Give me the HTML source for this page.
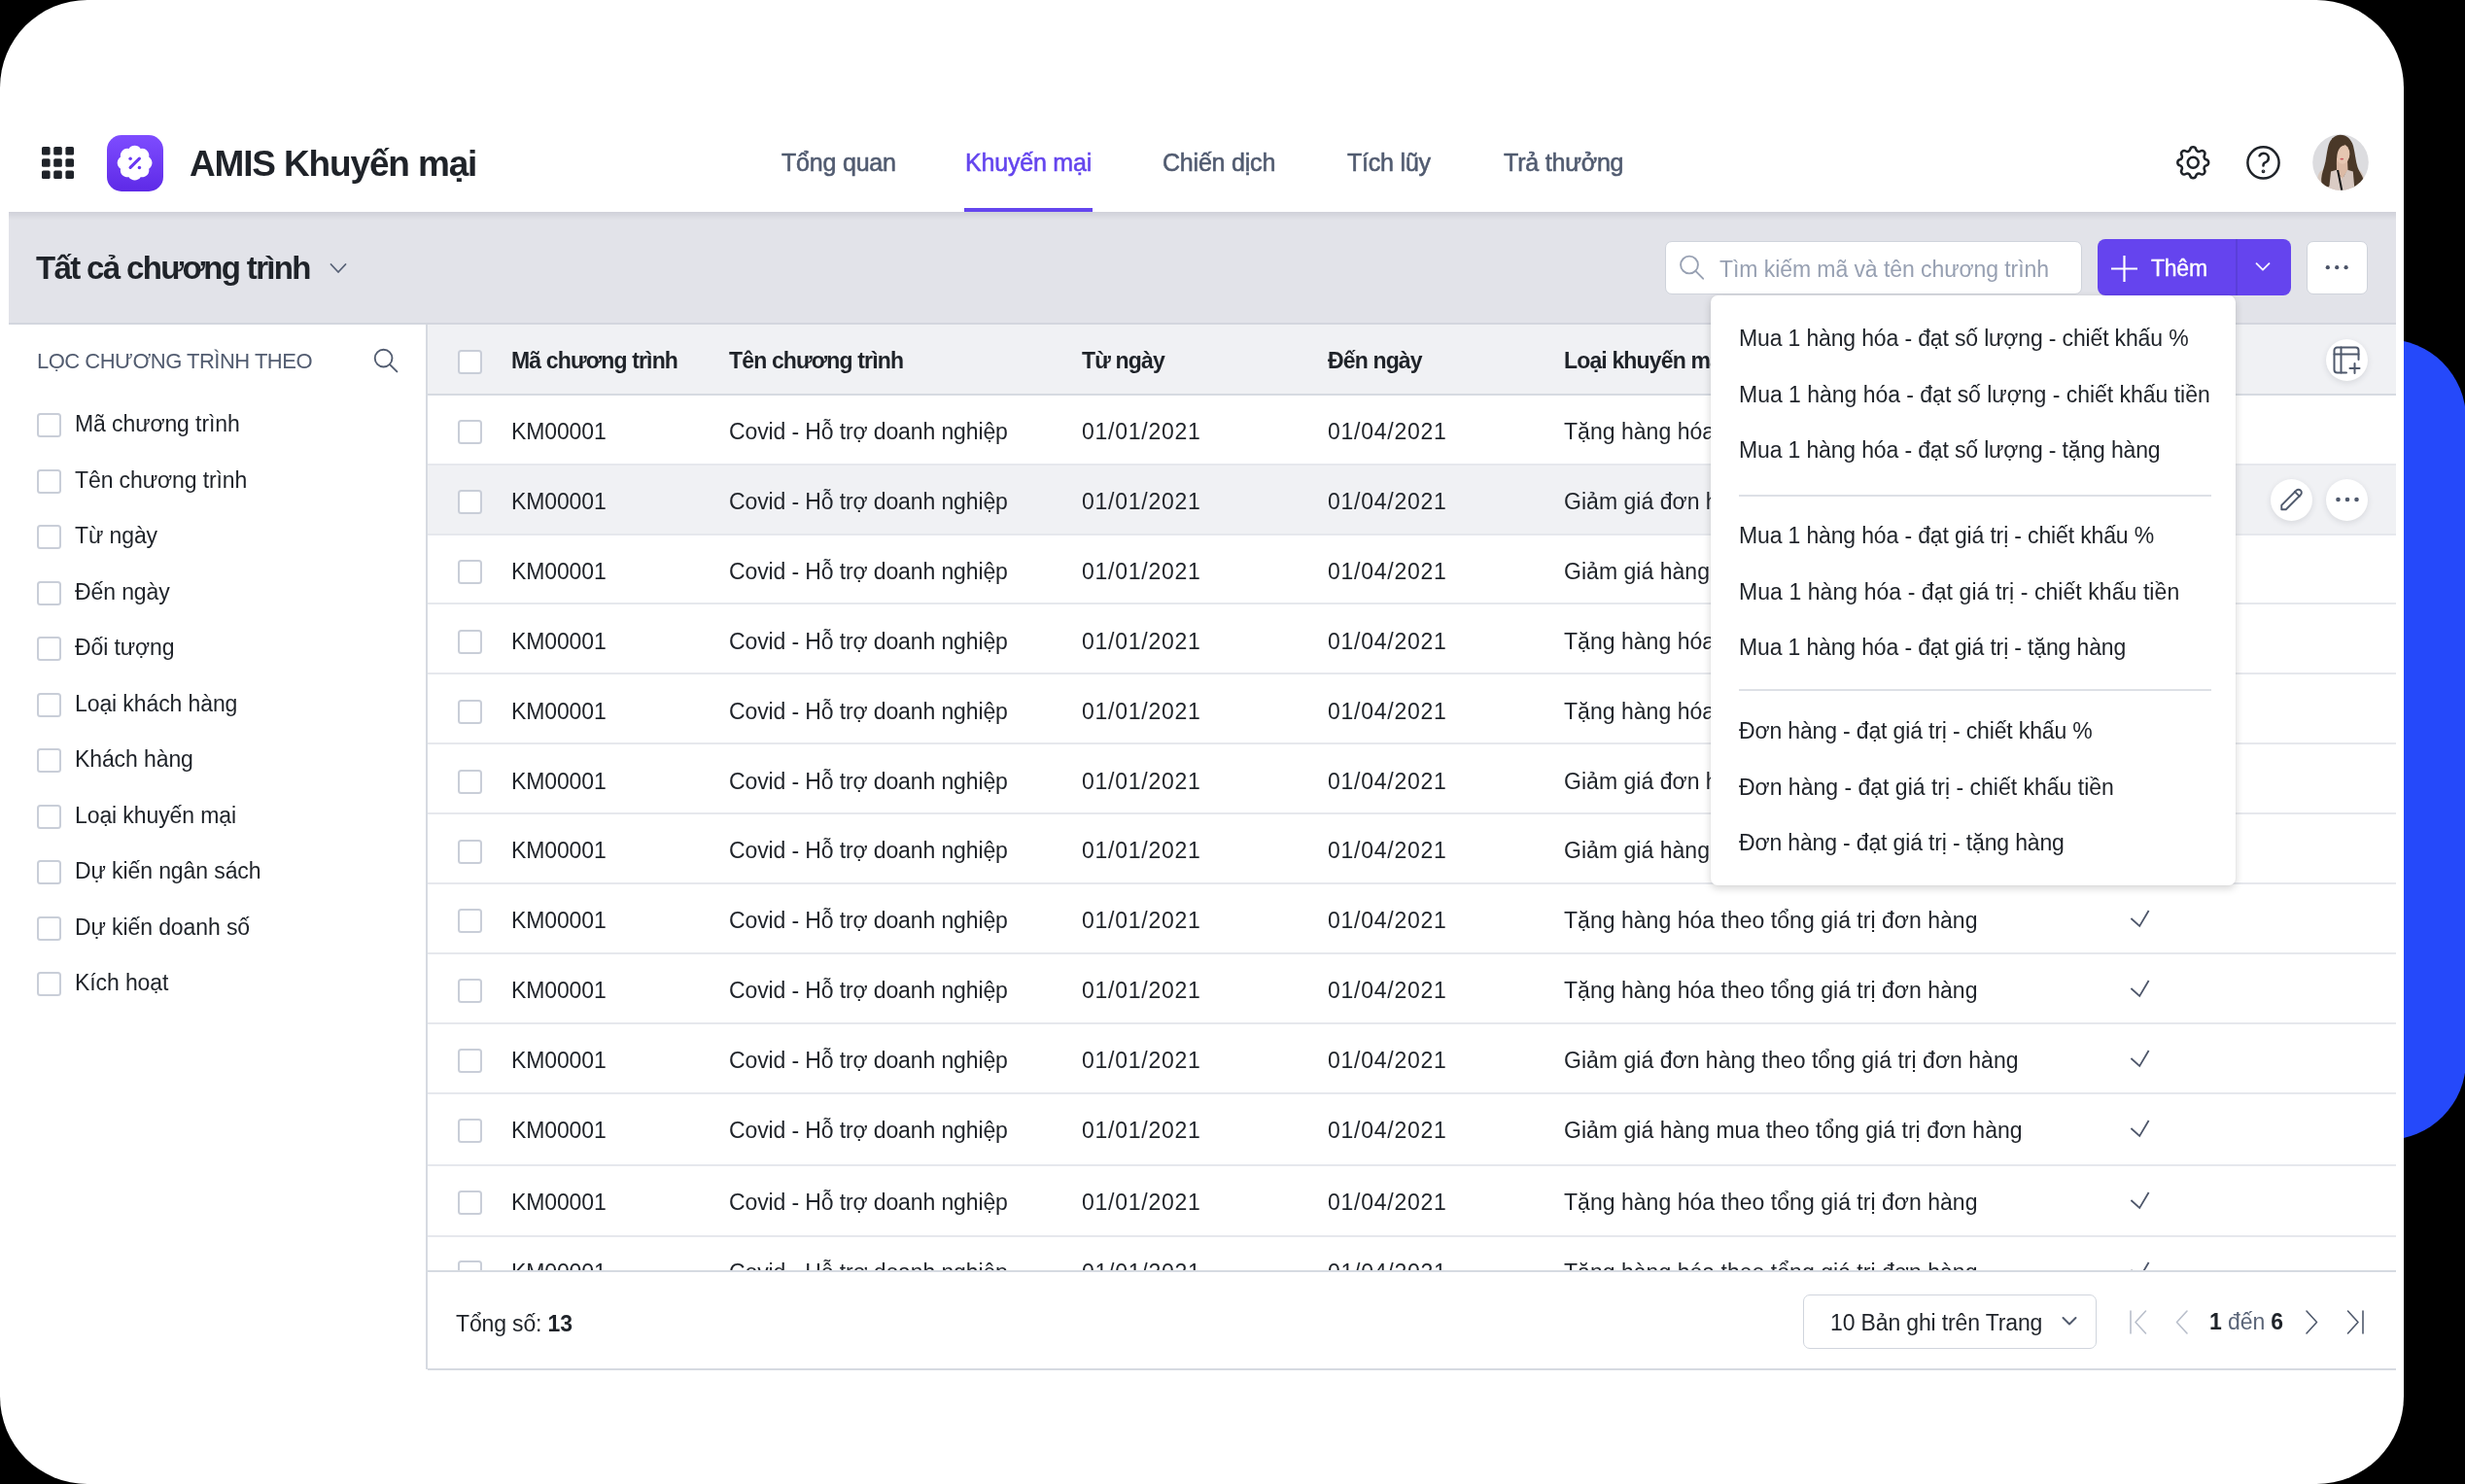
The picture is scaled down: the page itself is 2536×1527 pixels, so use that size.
<!DOCTYPE html>
<html lang="vi">
<head>
<meta charset="utf-8">
<title>AMIS Khuyến mại</title>
<style>
*{box-sizing:border-box;margin:0;padding:0}
html,body{width:2536px;height:1527px;overflow:hidden;background:#000}
body{position:relative;font-family:"Liberation Sans",sans-serif;color:#1f2329}
.abs{position:absolute}
.t{position:absolute;white-space:nowrap}
#blue{position:absolute;left:2300px;top:349px;width:237px;height:824px;border-radius:82px;background:#2549fa}
#card{position:absolute;left:0;top:0;width:2473px;height:1527px;border-radius:90px;background:#fff;overflow:hidden;will-change:transform}
/* header */
.nav{font-size:25px;line-height:25px;letter-spacing:-0.2px;color:#515b70;-webkit-text-stroke:0.55px #515b70}
.nav.active{color:#6445ee;-webkit-text-stroke:0.55px #6445ee}
/* toolbar */
#toolbar{position:absolute;left:9px;top:218px;width:2456px;height:116px;background:#e2e3e9;border-bottom:2px solid #d3d6de}
#toolbar:before{content:"";position:absolute;left:0;right:0;top:0;height:9px;background:linear-gradient(#d0d1d9,#e2e3e9)}
/* sidebar */
#sidebar{position:absolute;left:9px;top:334px;width:431px;height:1075px;background:#fff;border-right:2px solid #d6dae1}
.cb{position:absolute;width:25px;height:25px;border:2px solid #c9ced8;border-radius:3.5px;background:#fff}
.lbl{font-size:23px;line-height:23px;letter-spacing:-0.1px;color:#1f2329}
/* table */
#table{position:absolute;left:440px;top:334px;width:2025px;height:1076px;background:#fff;overflow:hidden}
#tbody{position:absolute;left:0;top:72px;width:2025px;height:903px;overflow:hidden}
#tbody:after{content:"";position:absolute;left:0;right:0;bottom:0;height:2px;background:#d6dae1}
#tfoot-line{position:absolute;left:440px;top:1407.5px;width:2025px;height:2px;background:#d6dae1}
.hrow{position:absolute;left:0;width:2025px;background:#f0f1f4}
.hline{position:absolute;left:0;width:2025px;height:2px;background:#d6dae1}
.rline{position:absolute;left:0;width:2025px;height:2px;background:#e6e8ed}
.hover{position:absolute;left:0;width:2025px;background:#f0f1f4}
.cell{font-size:23px;line-height:23px;letter-spacing:-0.12px;color:#1f2329}
.date{letter-spacing:0.75px}
.typ{letter-spacing:0.03px}
.hcell{font-size:23px;line-height:23px;font-weight:bold;letter-spacing:-0.85px;color:#1f2329}
.circ{position:absolute;width:43px;height:43px;border-radius:50%;background:#fff;box-shadow:0 2px 6px rgba(30,40,60,0.12)}
/* dropdown */
#dd{position:absolute;left:1760px;top:304px;width:540px;height:607px;background:#fff;border-radius:7px;box-shadow:0 3px 9px rgba(0,0,0,0.17),0 0 2px rgba(0,0,0,0.06)}
.ddi{font-size:23px;line-height:23px;letter-spacing:-0.15px;color:#1f2329}
.sep{position:absolute;left:29px;width:486px;height:2px;background:#dde0e6}
</style>
</head>
<body>
<div id="blue"></div>
<div id="card">
  <!-- ============ HEADER ============ -->
  <svg class="abs" style="left:43px;top:151px" width="33" height="33" viewBox="0 0 33 33">
    <g fill="#1f2329">
      <rect x="0" y="0" width="8.6" height="8.6" rx="1.6"/><rect x="12.2" y="0" width="8.6" height="8.6" rx="1.6"/><rect x="24.4" y="0" width="8.6" height="8.6" rx="1.6"/>
      <rect x="0" y="12.2" width="8.6" height="8.6" rx="1.6"/><rect x="12.2" y="12.2" width="8.6" height="8.6" rx="1.6"/><rect x="24.4" y="12.2" width="8.6" height="8.6" rx="1.6"/>
      <rect x="0" y="24.4" width="8.6" height="8.6" rx="1.6"/><rect x="12.2" y="24.4" width="8.6" height="8.6" rx="1.6"/><rect x="24.4" y="24.4" width="8.6" height="8.6" rx="1.6"/>
    </g>
  </svg>
  <svg class="abs" style="left:109.5px;top:138.5px" width="58" height="58" viewBox="0 0 58 58">
    <defs><linearGradient id="lg" x1="0" y1="0" x2="0" y2="1"><stop offset="0" stop-color="#7e4cff"/><stop offset="1" stop-color="#5e2ae7"/></linearGradient></defs>
    <rect x="0" y="0" width="58" height="58" rx="15" fill="url(#lg)"/>
    <path transform="translate(7.12,7.12) scale(1.79)" fill="#fff" d="M3.85 8.62a4 4 0 0 1 4.78-4.77 4 4 0 0 1 6.74 0 4 4 0 0 1 4.78 4.78 4 4 0 0 1 0 6.74 4 4 0 0 1-4.77 4.78 4 4 0 0 1-6.75 0 4 4 0 0 1-4.78-4.77 4 4 0 0 1 0-6.76Z"/>
    <g fill="#6b3af3"><circle cx="24.1" cy="24.2" r="1.75"/><circle cx="33.4" cy="33.4" r="1.75"/></g>
    <line x1="24.1" y1="33.4" x2="33.4" y2="24.2" stroke="#6b3af3" stroke-width="3.2" stroke-linecap="round"/>
  </svg>
  <div class="t" style="left:195px;top:149.5px;font-size:37px;line-height:37px;font-weight:bold;letter-spacing:-1.15px;color:#1f2329">AMIS Khuyến mại</div>

  <div class="t nav" style="left:804px;top:155px">Tổng quan</div>
  <div class="t nav active" style="left:993px;top:155px">Khuyến mại</div>
  <div class="t nav" style="left:1196px;top:155px">Chiến dịch</div>
  <div class="t nav" style="left:1386px;top:155px">Tích lũy</div>
  <div class="t nav" style="left:1547px;top:155px">Trả thưởng</div>
  <div class="abs" style="left:992px;top:214px;width:132px;height:4px;background:#6445ee"></div>

  <!-- gear -->
  <svg class="abs" style="left:2235.4px;top:146.2px" width="42.5" height="42.5" viewBox="0 0 24 24" fill="none" stroke="#1f2329" stroke-width="1.42" stroke-linecap="round" stroke-linejoin="round">
    <path d="M10.325 4.317c.426 -1.756 2.924 -1.756 3.35 0a1.724 1.724 0 0 0 2.573 1.066c1.543 -.94 3.31 .826 2.37 2.37a1.724 1.724 0 0 0 1.065 2.572c1.756 .426 1.756 2.924 0 3.35a1.724 1.724 0 0 0 -1.066 2.573c.94 1.543 -.826 3.31 -2.37 2.37a1.724 1.724 0 0 0 -2.572 1.065c-.426 1.756 -2.924 1.756 -3.35 0a1.724 1.724 0 0 0 -2.573 -1.066c-1.543 .94 -3.31 -.826 -2.37 -2.37a1.724 1.724 0 0 0 -1.065 -2.572c-1.756 -.426 -1.756 -2.924 0 -3.35a1.724 1.724 0 0 0 1.066 -2.573c-.94 -1.543 .826 -3.31 2.37 -2.37c1 .608 2.296 .07 2.572 -1.065z"/>
    <circle cx="12" cy="12" r="3.1"/>
  </svg>
  <!-- help -->
  <svg class="abs" style="left:2310px;top:149px" width="37" height="37" viewBox="0 0 37 37" fill="none" stroke="#1f2329" stroke-width="2.5" stroke-linecap="round" stroke-linejoin="round">
    <circle cx="18.5" cy="18.4" r="16.1"/>
    <path d="M14.6 11.3C15.5 9.7 17 8.7 18.9 8.7C21.6 8.7 23.9 10.9 23.9 13.6C23.9 15.8 22.4 17.4 20.6 18.1C19.3 18.6 18.5 19.8 18.5 21.2V21.5"/>
    <circle cx="18.5" cy="27.3" r="0.6" fill="#1f2329" stroke-width="2.6"/>
  </svg>
  <!-- avatar -->
  <svg class="abs" style="left:2378.7px;top:138.3px" width="58" height="58" viewBox="0 0 58 58">
    <defs><clipPath id="av"><circle cx="29" cy="29" r="28.8"/></clipPath></defs>
    <g clip-path="url(#av)">
      <rect width="58" height="58" fill="#dcdcdf"/>
      <path d="M4 58L5.5 44C6.5 39 9 37 12 36.5L46 36.5C50 37.5 52 40 53 45L54.5 58Z" fill="#d9cbc2"/>
      <path d="M28.3 0.7C35 0.5 40 5 42 12C44 20 44.5 28 46.5 34C48.5 40 52.5 43 52.3 48C52 52 49 54.5 45 55C40 56 37 50 36.5 44L22 44C21 50 18 55 14 55C11 55 9 51 9.2 46C9.5 40 12 35 13.5 28C15 20 15.5 12 18.5 7C21 3 24.5 0.8 28.3 0.7Z" fill="#4a3828"/>
      <path d="M24.8 26L36 26L36.5 37L30.6 46L25 37Z" fill="#dcbaa5"/>
      <ellipse cx="31" cy="20.5" rx="7.4" ry="10.3" fill="#e6c6b1"/>
      <path d="M20.5 4C26 2.5 31.5 6 33.5 11.5C28.5 12 25.8 16 25.2 24C25 28 24 30.5 22 32L18.5 30Z" fill="#4a3828"/>
      <path d="M38 10C39.5 15 39 22 38.4 28L40.5 31L41 13Z" fill="#4a3828"/>
      <ellipse cx="30.3" cy="25.6" rx="1.9" ry="0.85" fill="#c9575e"/>
      <path d="M19 38.5L25 36.8L30.5 46.5L30.5 58L17 58Z" fill="#dacbc4"/>
      <path d="M36 36.8L41.8 38.5L43.5 58L30.5 58L30.5 46.5Z" fill="#d6c7c0"/>
      <path d="M25 37L27.1 37L31.4 58L29.2 58Z" fill="#1c1c1c"/>
    </g>
  </svg>

  <!-- ============ TOOLBAR ============ -->
  <div id="toolbar"></div>
  <div class="t" style="left:37px;top:258.8px;font-size:33px;line-height:33px;font-weight:bold;letter-spacing:-1.65px;color:#1f2329">Tất cả chương trình</div>
  <svg class="abs" style="left:339px;top:270px" width="18" height="12" viewBox="0 0 18 12" fill="none" stroke="#566075" stroke-width="1.8" stroke-linecap="round" stroke-linejoin="round"><path d="M1.5 2l7.5 8 7.5-8"/></svg>

  <div class="abs" style="left:1712.5px;top:247.5px;width:429.5px;height:55.5px;background:#fff;border:1.5px solid #cfd3db;border-radius:7px"></div>
  <svg class="abs" style="left:1726px;top:261px" width="29" height="29" viewBox="0 0 29 29" fill="none" stroke="#98a1b3" stroke-width="1.9" stroke-linecap="round"><circle cx="12" cy="11.5" r="8.9"/><path d="M18.4 17.9l7.7 7.8"/></svg>
  <div class="t" style="left:1769px;top:265.5px;font-size:23px;line-height:23px;letter-spacing:-0.07px;color:#97a0b2">Tìm kiếm mã và tên chương trình</div>

  <div class="abs" style="left:2158px;top:246px;width:199px;height:57.5px;background:#6544ee;border-radius:8px"></div>
  <div class="abs" style="left:2299.5px;top:246px;width:2px;height:57.5px;background:#5a3fd9"></div>
  <svg class="abs" style="left:2171px;top:262px" width="29" height="29" viewBox="0 0 29 29" stroke="#fff" stroke-width="2.2"><path d="M14.5 1v27M1 14.5h27"/></svg>
  <div class="t" style="left:2213px;top:264.5px;font-size:23px;line-height:23px;letter-spacing:-0.25px;color:#fff;-webkit-text-stroke:0.35px #fff">Thêm</div>
  <svg class="abs" style="left:2319px;top:268px" width="18" height="12" viewBox="0 0 18 12" fill="none" stroke="#fff" stroke-width="1.8" stroke-linecap="round" stroke-linejoin="round"><path d="M2.5 3.2l6.5 6.5 6.5-6.5"/></svg>

  <div class="abs" style="left:2372.5px;top:247.5px;width:63px;height:55.5px;background:#fff;border:1.5px solid #cfd3db;border-radius:7px"></div>
  <svg class="abs" style="left:2390px;top:270px" width="28" height="10" viewBox="0 0 28 10" fill="#4a5266"><circle cx="4.8" cy="5.2" r="2.1"/><circle cx="14.2" cy="5.2" r="2.1"/><circle cx="23.6" cy="5.2" r="2.1"/></svg>

  <!-- ============ SIDEBAR ============ -->
  <div id="sidebar"></div>
  <div class="t" style="left:38px;top:361px;font-size:22px;line-height:22px;letter-spacing:-0.5px;color:#525c70">LỌC CHƯƠNG TRÌNH THEO</div>
  <svg class="abs" style="left:383px;top:357px" width="28" height="28" viewBox="0 0 29 29" fill="none" stroke="#525c70" stroke-width="1.95" stroke-linecap="round"><circle cx="12" cy="12" r="9.2"/><path d="M18.7 18.7l7.6 7.6"/></svg>
  <div class="cb" style="left:37.5px;top:425.0px"></div>
  <div class="t lbl" style="left:77px;top:425.0px">Mã chương trình</div>
  <div class="cb" style="left:37.5px;top:482.5px"></div>
  <div class="t lbl" style="left:77px;top:482.5px">Tên chương trình</div>
  <div class="cb" style="left:37.5px;top:540.0px"></div>
  <div class="t lbl" style="left:77px;top:540.0px">Từ ngày</div>
  <div class="cb" style="left:37.5px;top:597.5px"></div>
  <div class="t lbl" style="left:77px;top:597.5px">Đến ngày</div>
  <div class="cb" style="left:37.5px;top:655.0px"></div>
  <div class="t lbl" style="left:77px;top:655.0px">Đối tượng</div>
  <div class="cb" style="left:37.5px;top:712.5px"></div>
  <div class="t lbl" style="left:77px;top:712.5px">Loại khách hàng</div>
  <div class="cb" style="left:37.5px;top:770.0px"></div>
  <div class="t lbl" style="left:77px;top:770.0px">Khách hàng</div>
  <div class="cb" style="left:37.5px;top:827.5px"></div>
  <div class="t lbl" style="left:77px;top:827.5px">Loại khuyến mại</div>
  <div class="cb" style="left:37.5px;top:885.0px"></div>
  <div class="t lbl" style="left:77px;top:885.0px">Dự kiến ngân sách</div>
  <div class="cb" style="left:37.5px;top:942.5px"></div>
  <div class="t lbl" style="left:77px;top:942.5px">Dự kiến doanh số</div>
  <div class="cb" style="left:37.5px;top:1000.0px"></div>
  <div class="t lbl" style="left:77px;top:1000.0px">Kích hoạt</div>

  <!-- ============ TABLE ============ -->
  <div id="table">
    <div class="hrow" style="top:0;height:71.7px"></div>
    <div class="hline" style="top:70.8px"></div>
    <div class="cb" style="left:31px;top:26px"></div>
    <div class="t hcell" style="left:86px;top:26.2px">Mã chương trình</div>
    <div class="t hcell" style="left:310px;top:26.2px">Tên chương trình</div>
    <div class="t hcell" style="left:673px;top:26.2px">Từ ngày</div>
    <div class="t hcell" style="left:926px;top:26.2px">Đến ngày</div>
    <div class="t hcell" style="left:1169px;top:26.2px">Loại khuyến mại</div>
    <div class="t hcell" style="left:1753px;top:26.2px">Kích hoạt</div>
    <div id="tbody">
    <div class="rline" style="top:70.6px"></div>
    <div class="cb" style="left:31px;top:26.1px"></div>
    <div class="t cell" style="left:86px;top:27.0px">KM00001</div>
    <div class="t cell" style="left:310px;top:27.0px">Covid - Hỗ trợ doanh nghiệp</div>
    <div class="t cell date" style="left:673px;top:27.0px">01/01/2021</div>
    <div class="t cell date" style="left:926px;top:27.0px">01/04/2021</div>
    <div class="t cell typ" style="left:1169px;top:27.0px">Tặng hàng hóa theo tổng giá trị đơn hàng</div>
    <div class="abs" style="left:1750px;top:25.1px;line-height:0"><svg width="24" height="22" viewBox="0 0 24 22" fill="none" stroke="#4d566a" stroke-width="1.8" stroke-linejoin="miter"><path d="M2.4 11L11.2 18.9 20.6 3"/></svg></div>
    <div class="hover" style="top:72.5px;height:70.1px"></div>
    <div class="rline" style="top:142.5px"></div>
    <div class="cb" style="left:31px;top:98.0px"></div>
    <div class="t cell" style="left:86px;top:98.9px">KM00001</div>
    <div class="t cell" style="left:310px;top:98.9px">Covid - Hỗ trợ doanh nghiệp</div>
    <div class="t cell date" style="left:673px;top:98.9px">01/01/2021</div>
    <div class="t cell date" style="left:926px;top:98.9px">01/04/2021</div>
    <div class="t cell typ" style="left:1169px;top:98.9px">Giảm giá đơn hàng theo tổng giá trị đơn hàng</div>
    <div class="abs" style="left:1750px;top:97.0px;line-height:0"><svg width="24" height="22" viewBox="0 0 24 22" fill="none" stroke="#4d566a" stroke-width="1.8" stroke-linejoin="miter"><path d="M2.4 11L11.2 18.9 20.6 3"/></svg></div>
    <div class="rline" style="top:214.4px"></div>
    <div class="cb" style="left:31px;top:169.9px"></div>
    <div class="t cell" style="left:86px;top:170.8px">KM00001</div>
    <div class="t cell" style="left:310px;top:170.8px">Covid - Hỗ trợ doanh nghiệp</div>
    <div class="t cell date" style="left:673px;top:170.8px">01/01/2021</div>
    <div class="t cell date" style="left:926px;top:170.8px">01/04/2021</div>
    <div class="t cell typ" style="left:1169px;top:170.8px">Giảm giá hàng mua theo tổng giá trị đơn hàng</div>
    <div class="abs" style="left:1750px;top:168.9px;line-height:0"><svg width="24" height="22" viewBox="0 0 24 22" fill="none" stroke="#4d566a" stroke-width="1.8" stroke-linejoin="miter"><path d="M2.4 11L11.2 18.9 20.6 3"/></svg></div>
    <div class="rline" style="top:286.3px"></div>
    <div class="cb" style="left:31px;top:241.8px"></div>
    <div class="t cell" style="left:86px;top:242.7px">KM00001</div>
    <div class="t cell" style="left:310px;top:242.7px">Covid - Hỗ trợ doanh nghiệp</div>
    <div class="t cell date" style="left:673px;top:242.7px">01/01/2021</div>
    <div class="t cell date" style="left:926px;top:242.7px">01/04/2021</div>
    <div class="t cell typ" style="left:1169px;top:242.7px">Tặng hàng hóa theo tổng giá trị đơn hàng</div>
    <div class="abs" style="left:1750px;top:240.8px;line-height:0"><svg width="24" height="22" viewBox="0 0 24 22" fill="none" stroke="#4d566a" stroke-width="1.8" stroke-linejoin="miter"><path d="M2.4 11L11.2 18.9 20.6 3"/></svg></div>
    <div class="rline" style="top:358.2px"></div>
    <div class="cb" style="left:31px;top:313.7px"></div>
    <div class="t cell" style="left:86px;top:314.6px">KM00001</div>
    <div class="t cell" style="left:310px;top:314.6px">Covid - Hỗ trợ doanh nghiệp</div>
    <div class="t cell date" style="left:673px;top:314.6px">01/01/2021</div>
    <div class="t cell date" style="left:926px;top:314.6px">01/04/2021</div>
    <div class="t cell typ" style="left:1169px;top:314.6px">Tặng hàng hóa theo tổng giá trị đơn hàng</div>
    <div class="abs" style="left:1750px;top:312.7px;line-height:0"><svg width="24" height="22" viewBox="0 0 24 22" fill="none" stroke="#4d566a" stroke-width="1.8" stroke-linejoin="miter"><path d="M2.4 11L11.2 18.9 20.6 3"/></svg></div>
    <div class="rline" style="top:430.1px"></div>
    <div class="cb" style="left:31px;top:385.6px"></div>
    <div class="t cell" style="left:86px;top:386.5px">KM00001</div>
    <div class="t cell" style="left:310px;top:386.5px">Covid - Hỗ trợ doanh nghiệp</div>
    <div class="t cell date" style="left:673px;top:386.5px">01/01/2021</div>
    <div class="t cell date" style="left:926px;top:386.5px">01/04/2021</div>
    <div class="t cell typ" style="left:1169px;top:386.5px">Giảm giá đơn hàng theo tổng giá trị đơn hàng</div>
    <div class="abs" style="left:1750px;top:384.6px;line-height:0"><svg width="24" height="22" viewBox="0 0 24 22" fill="none" stroke="#4d566a" stroke-width="1.8" stroke-linejoin="miter"><path d="M2.4 11L11.2 18.9 20.6 3"/></svg></div>
    <div class="rline" style="top:502.0px"></div>
    <div class="cb" style="left:31px;top:457.5px"></div>
    <div class="t cell" style="left:86px;top:458.4px">KM00001</div>
    <div class="t cell" style="left:310px;top:458.4px">Covid - Hỗ trợ doanh nghiệp</div>
    <div class="t cell date" style="left:673px;top:458.4px">01/01/2021</div>
    <div class="t cell date" style="left:926px;top:458.4px">01/04/2021</div>
    <div class="t cell typ" style="left:1169px;top:458.4px">Giảm giá hàng mua theo tổng giá trị đơn hàng</div>
    <div class="abs" style="left:1750px;top:456.5px;line-height:0"><svg width="24" height="22" viewBox="0 0 24 22" fill="none" stroke="#4d566a" stroke-width="1.8" stroke-linejoin="miter"><path d="M2.4 11L11.2 18.9 20.6 3"/></svg></div>
    <div class="rline" style="top:573.9px"></div>
    <div class="cb" style="left:31px;top:529.4px"></div>
    <div class="t cell" style="left:86px;top:530.3px">KM00001</div>
    <div class="t cell" style="left:310px;top:530.3px">Covid - Hỗ trợ doanh nghiệp</div>
    <div class="t cell date" style="left:673px;top:530.3px">01/01/2021</div>
    <div class="t cell date" style="left:926px;top:530.3px">01/04/2021</div>
    <div class="t cell typ" style="left:1169px;top:530.3px">Tặng hàng hóa theo tổng giá trị đơn hàng</div>
    <div class="abs" style="left:1750px;top:528.4px;line-height:0"><svg width="24" height="22" viewBox="0 0 24 22" fill="none" stroke="#4d566a" stroke-width="1.8" stroke-linejoin="miter"><path d="M2.4 11L11.2 18.9 20.6 3"/></svg></div>
    <div class="rline" style="top:645.8px"></div>
    <div class="cb" style="left:31px;top:601.3px"></div>
    <div class="t cell" style="left:86px;top:602.2px">KM00001</div>
    <div class="t cell" style="left:310px;top:602.2px">Covid - Hỗ trợ doanh nghiệp</div>
    <div class="t cell date" style="left:673px;top:602.2px">01/01/2021</div>
    <div class="t cell date" style="left:926px;top:602.2px">01/04/2021</div>
    <div class="t cell typ" style="left:1169px;top:602.2px">Tặng hàng hóa theo tổng giá trị đơn hàng</div>
    <div class="abs" style="left:1750px;top:600.3px;line-height:0"><svg width="24" height="22" viewBox="0 0 24 22" fill="none" stroke="#4d566a" stroke-width="1.8" stroke-linejoin="miter"><path d="M2.4 11L11.2 18.9 20.6 3"/></svg></div>
    <div class="rline" style="top:717.7px"></div>
    <div class="cb" style="left:31px;top:673.2px"></div>
    <div class="t cell" style="left:86px;top:674.1px">KM00001</div>
    <div class="t cell" style="left:310px;top:674.1px">Covid - Hỗ trợ doanh nghiệp</div>
    <div class="t cell date" style="left:673px;top:674.1px">01/01/2021</div>
    <div class="t cell date" style="left:926px;top:674.1px">01/04/2021</div>
    <div class="t cell typ" style="left:1169px;top:674.1px">Giảm giá đơn hàng theo tổng giá trị đơn hàng</div>
    <div class="abs" style="left:1750px;top:672.2px;line-height:0"><svg width="24" height="22" viewBox="0 0 24 22" fill="none" stroke="#4d566a" stroke-width="1.8" stroke-linejoin="miter"><path d="M2.4 11L11.2 18.9 20.6 3"/></svg></div>
    <div class="rline" style="top:791.7px"></div>
    <div class="cb" style="left:31px;top:745.1px"></div>
    <div class="t cell" style="left:86px;top:746.0px">KM00001</div>
    <div class="t cell" style="left:310px;top:746.0px">Covid - Hỗ trợ doanh nghiệp</div>
    <div class="t cell date" style="left:673px;top:746.0px">01/01/2021</div>
    <div class="t cell date" style="left:926px;top:746.0px">01/04/2021</div>
    <div class="t cell typ" style="left:1169px;top:746.0px">Giảm giá hàng mua theo tổng giá trị đơn hàng</div>
    <div class="abs" style="left:1750px;top:744.1px;line-height:0"><svg width="24" height="22" viewBox="0 0 24 22" fill="none" stroke="#4d566a" stroke-width="1.8" stroke-linejoin="miter"><path d="M2.4 11L11.2 18.9 20.6 3"/></svg></div>
    <div class="rline" style="top:865.3px"></div>
    <div class="cb" style="left:31px;top:819.1px"></div>
    <div class="t cell" style="left:86px;top:820.0px">KM00001</div>
    <div class="t cell" style="left:310px;top:820.0px">Covid - Hỗ trợ doanh nghiệp</div>
    <div class="t cell date" style="left:673px;top:820.0px">01/01/2021</div>
    <div class="t cell date" style="left:926px;top:820.0px">01/04/2021</div>
    <div class="t cell typ" style="left:1169px;top:820.0px">Tặng hàng hóa theo tổng giá trị đơn hàng</div>
    <div class="abs" style="left:1750px;top:818.1px;line-height:0"><svg width="24" height="22" viewBox="0 0 24 22" fill="none" stroke="#4d566a" stroke-width="1.8" stroke-linejoin="miter"><path d="M2.4 11L11.2 18.9 20.6 3"/></svg></div>
    <div class="cb" style="left:31px;top:890.9px"></div>
    <div class="t cell" style="left:86px;top:891.8px">KM00001</div>
    <div class="t cell" style="left:310px;top:891.8px">Covid - Hỗ trợ doanh nghiệp</div>
    <div class="t cell date" style="left:673px;top:891.8px">01/01/2021</div>
    <div class="t cell date" style="left:926px;top:891.8px">01/04/2021</div>
    <div class="t cell typ" style="left:1169px;top:891.8px">Tặng hàng hóa theo tổng giá trị đơn hàng</div>
    <div class="abs" style="left:1750px;top:889.9px;line-height:0"><svg width="24" height="22" viewBox="0 0 24 22" fill="none" stroke="#4d566a" stroke-width="1.8" stroke-linejoin="miter"><path d="M2.4 11L11.2 18.9 20.6 3"/></svg></div>
    </div>
  </div>

  <div id="tfoot-line"></div>
  <!-- column settings / row actions -->
  <div class="circ" style="left:2393px;top:349px"></div>
  <svg class="abs" style="left:2399px;top:355px" width="32" height="32" viewBox="0 0 32 32" fill="none" stroke="#4f596c" stroke-width="2" stroke-linecap="round">
    <path d="M15 28.5H5.5a3 3 0 0 1-3-3V5.5a3 3 0 0 1 3-3h19a3 3 0 0 1 3 3V15"/>
    <path d="M2.5 9.5h25M9.5 2.5v26"/>
    <path d="M23.5 19v10M18.5 24h10"/>
  </svg>
  <div class="circ" style="left:2336px;top:493px"></div>
  <svg class="abs" style="left:2340.9px;top:497.2px" width="33.6" height="33.6" viewBox="0 0 24 24" fill="none" stroke="#4f596c" stroke-width="1.36" stroke-linecap="round" stroke-linejoin="round">
    <path d="M4.5 19.5h3.2l10.8-10.8a2.26 2.26 0 1 0 -3.2-3.2l-10.8 10.8v3.2"/><path d="M14.2 6.3l3.5 3.5"/>
  </svg>
  <div class="circ" style="left:2393px;top:493px"></div>
  <svg class="abs" style="left:2401px;top:509px" width="28" height="10" viewBox="0 0 28 10" fill="#4f596c"><circle cx="4.5" cy="5" r="2.3"/><circle cx="14" cy="5" r="2.3"/><circle cx="23.5" cy="5" r="2.3"/></svg>

  <!-- ============ FOOTER ============ -->
  <div class="t" style="left:469px;top:1350.8px;font-size:23px;line-height:23px;letter-spacing:-0.15px;color:#1f2329">Tổng số: <b>13</b></div>
  <div class="abs" style="left:1854.5px;top:1331.5px;width:302.5px;height:56px;border:1.5px solid #d0d5dd;border-radius:7px;background:#fff"></div>
  <div class="t" style="left:1883px;top:1349.8px;font-size:23px;line-height:23px;letter-spacing:-0.14px;color:#1f2329">10 Bản ghi trên Trang</div>
  <svg class="abs" style="left:2120px;top:1353px" width="18" height="12" viewBox="0 0 18 12" fill="none" stroke="#505a6d" stroke-width="2" stroke-linecap="round" stroke-linejoin="round"><path d="M2.5 3l6.5 6.5 6.5-6.5"/></svg>
  <svg class="abs" style="left:2189px;top:1347px" width="22" height="27" viewBox="0 0 22 27" fill="none" stroke="#b9bfcb" stroke-width="1.6" stroke-linecap="round" stroke-linejoin="round"><path d="M3 2v23M18.5 2L8 13.5 18.5 25"/></svg>
  <svg class="abs" style="left:2236px;top:1347px" width="18" height="27" viewBox="0 0 18 27" fill="none" stroke="#b9bfcb" stroke-width="1.6" stroke-linecap="round" stroke-linejoin="round"><path d="M14 2L3.5 13.5 14 25"/></svg>
  <div class="t" style="left:2273px;top:1349.3px;font-size:23px;line-height:23px;letter-spacing:-0.1px;color:#5b6578"><b style="color:#1f2329">1</b> đến <b style="color:#1f2329">6</b></div>
  <svg class="abs" style="left:2369px;top:1347px" width="18" height="27" viewBox="0 0 18 27" fill="none" stroke="#4f596c" stroke-width="1.6" stroke-linecap="round" stroke-linejoin="round"><path d="M4 2l10.5 11.5L4 25"/></svg>
  <svg class="abs" style="left:2412px;top:1347px" width="22" height="27" viewBox="0 0 22 27" fill="none" stroke="#4f596c" stroke-width="1.6" stroke-linecap="round" stroke-linejoin="round"><path d="M19 2v23M3.5 2L14 13.5 3.5 25"/></svg>

  <!-- ============ DROPDOWN ============ -->
  <div id="dd">
    <div class="t ddi" style="left:29px;top:33.1px">Mua 1 hàng hóa - đạt số lượng - chiết khấu %</div>
    <div class="t ddi" style="left:29px;top:90.8px;letter-spacing:-0.02px">Mua 1 hàng hóa - đạt số lượng - chiết khấu tiền</div>
    <div class="t ddi" style="left:29px;top:148.0px">Mua 1 hàng hóa - đạt số lượng - tặng hàng</div>
    <div class="sep" style="top:205px"></div>
    <div class="t ddi" style="left:29px;top:236.2px">Mua 1 hàng hóa - đạt giá trị - chiết khấu %</div>
    <div class="t ddi" style="left:29px;top:293.5px;letter-spacing:0.07px">Mua 1 hàng hóa - đạt giá trị - chiết khấu tiền</div>
    <div class="t ddi" style="left:29px;top:351.3px">Mua 1 hàng hóa - đạt giá trị - tặng hàng</div>
    <div class="sep" style="top:405px"></div>
    <div class="t ddi" style="left:29px;top:437.2px">Đơn hàng - đạt giá trị - chiết khấu %</div>
    <div class="t ddi" style="left:29px;top:494.9px;letter-spacing:0.0px">Đơn hàng - đạt giá trị - chiết khấu tiền</div>
    <div class="t ddi" style="left:29px;top:551.8px">Đơn hàng - đạt giá trị - tặng hàng</div>
  </div>
</div>
</body>
</html>
